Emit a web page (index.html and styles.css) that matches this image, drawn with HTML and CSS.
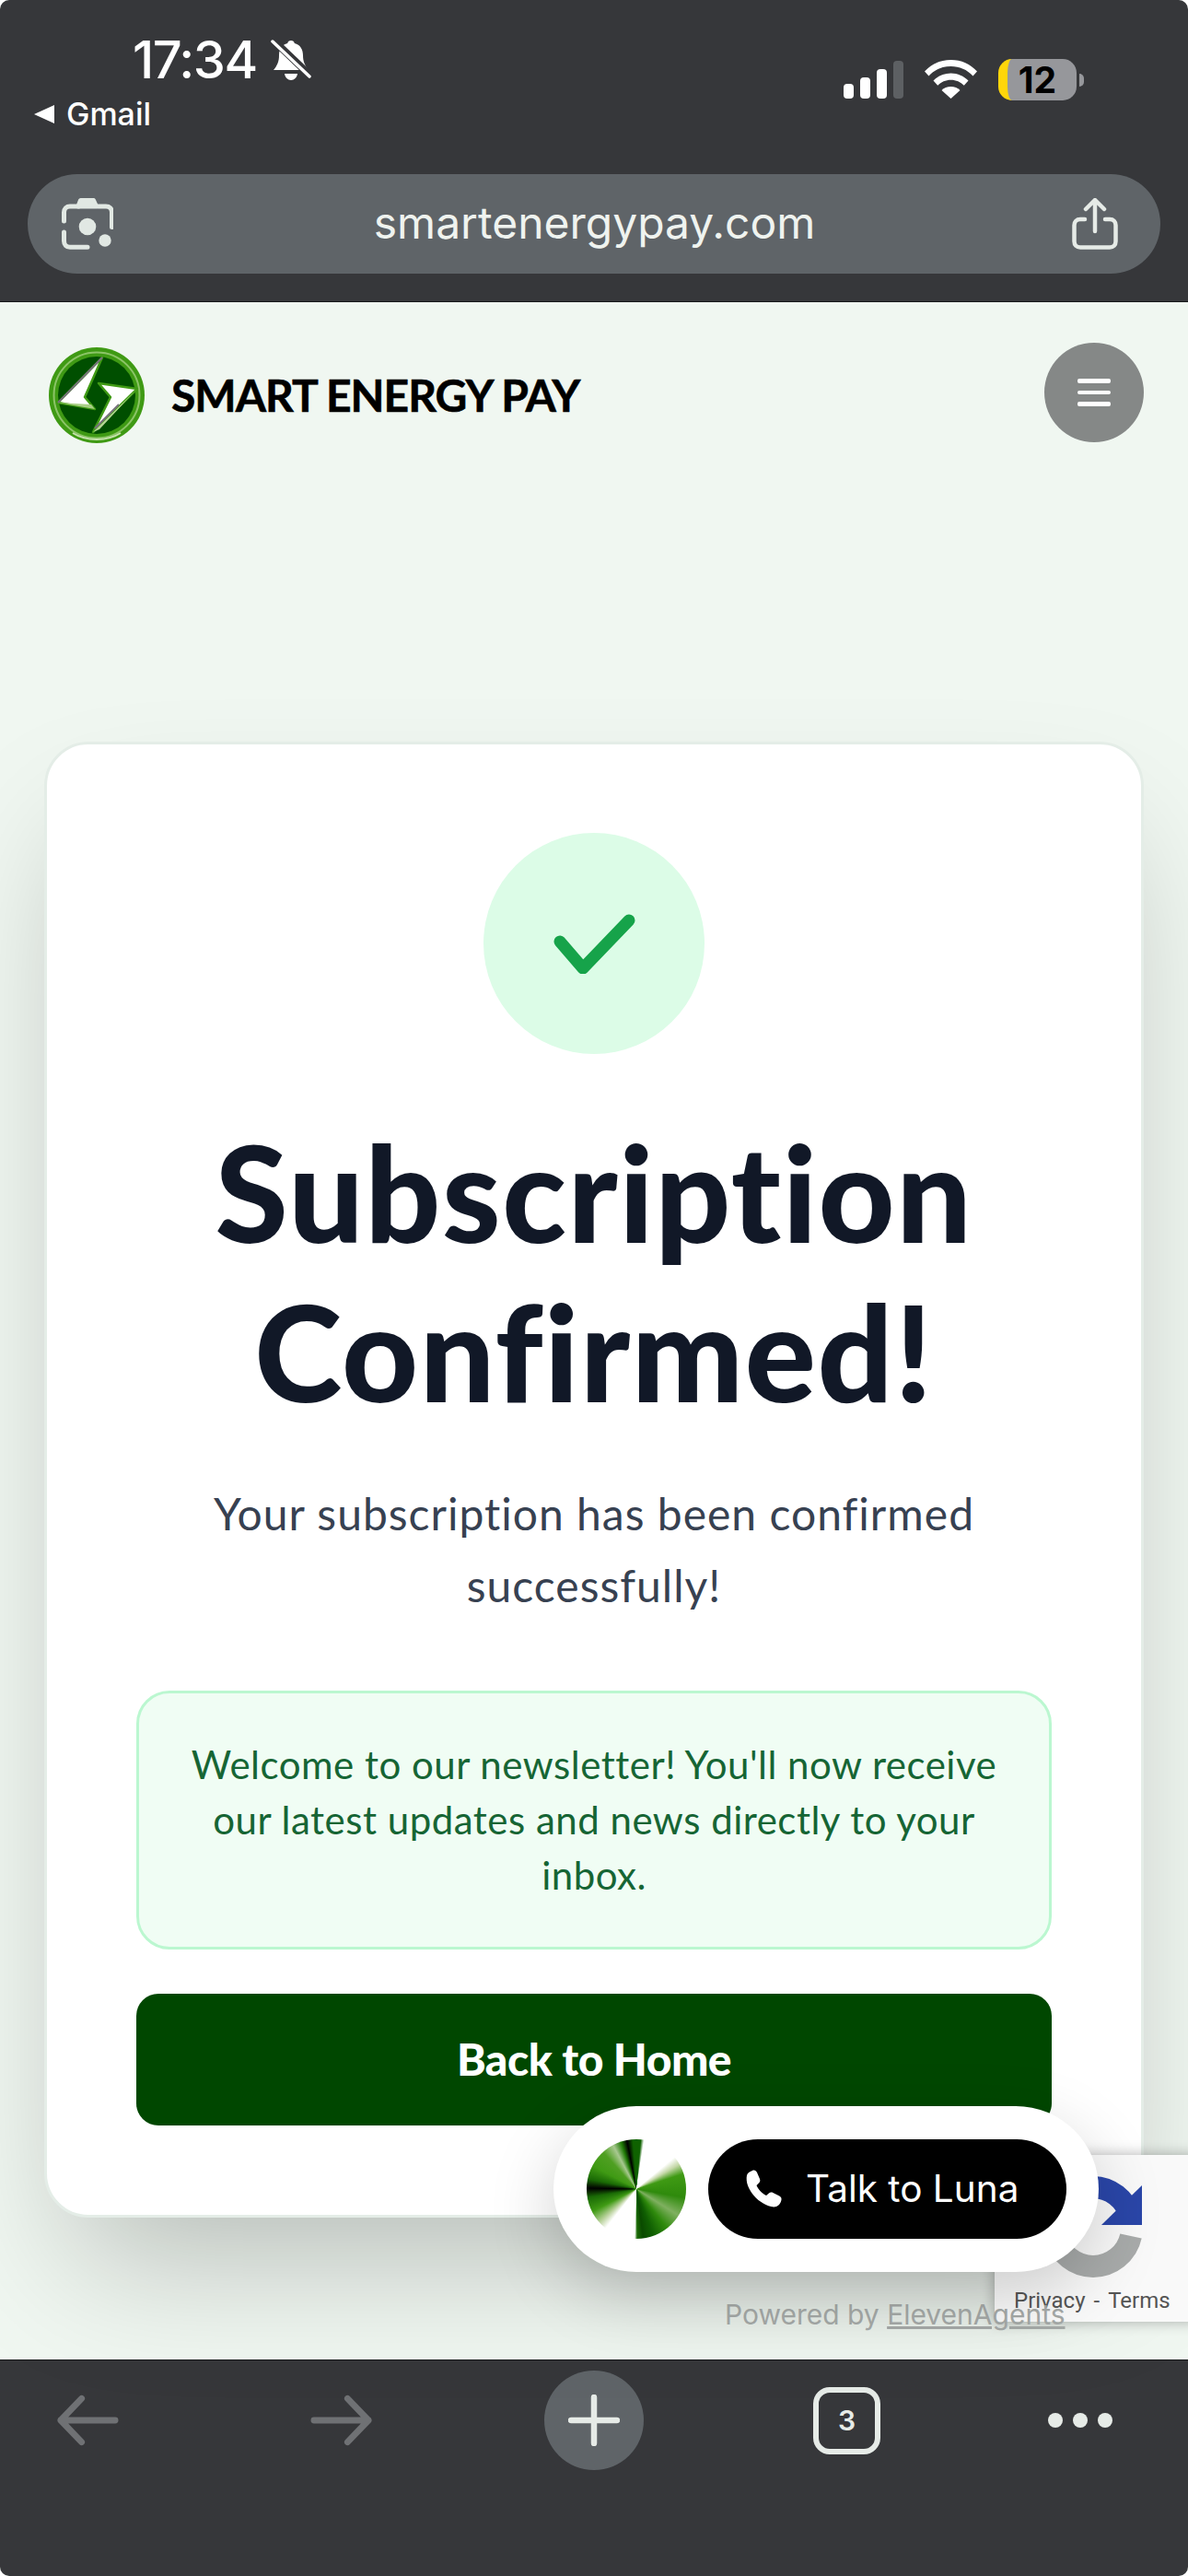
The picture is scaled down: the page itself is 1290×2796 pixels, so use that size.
FILE: index.html
```html
<!DOCTYPE html>
<html lang="en">
<head>
<meta charset="utf-8">
<title>Smart Energy Pay</title>
<link rel="stylesheet" href="styles.css">
</head>
<body>
<div class="phone">
  <header class="chrome-top">
    <div class="status">
      <div class="status-left">
        <div class="clock-row">
          <span class="clock">17:34</span>
          <svg class="bell" viewBox="0 0 44 44"><path d="M22 1c2 0 3.500 1.200 3.800 3 6.200 1.500 9.200 6.500 9.200 13 0 7 2 11 6 16H3c4-5 6-9 6-16 0-6.500 3-11.500 9.200-13C18.500 2.200 20 1 22 1z" fill="#fff"/><path d="M15 37h14c-.5 4-3.500 7-7 7s-6.500-3-7-7z" fill="#fff"/><path d="M1 -1l44 42" stroke="#36373a" stroke-width="8"/><path d="M2 2l40 38" stroke="#fff" stroke-width="3.500" stroke-linecap="round"/></svg>
        </div>
        <div class="back-app"><span class="back-tri"></span><span>Gmail</span></div>
      </div>
      <div class="status-right">
        <div class="signal"><i class="bar b1"></i><i class="bar b2"></i><i class="bar b3"></i><i class="bar b4"></i></div>
        <svg class="wifi" viewBox="0 0 57 42"><path d="M28.500 0C17 0 7.500 4.500 0 12.500l4.500 5C11 10.500 19 7 28.500 7S46 10.500 52.500 17.500l4.500-5C49.500 4.500 40 0 28.500 0z" fill="#fff"/><path d="M28.500 14.500c-7.500 0-14 3-19 8l4.700 5.200c3.700-3.700 8.700-6 14.300-6s10.600 2.300 14.300 6l4.700-5.200c-5-5-11.500-8-19-8z" fill="#fff"/><path d="M28.500 29c-4 0-7.500 1.600-10 4l10 9 10-9c-2.500-2.400-6-4-10-4z" fill="#fff"/></svg>
        <div class="battery"><div class="battery-body"><span class="battery-num">12</span></div><i class="battery-tip"></i></div>
      </div>
    </div>
    <div class="urlbar">
      <svg class="lens" viewBox="0 0 56 56" fill="none" stroke="#e1e8e3" stroke-width="5" stroke-linecap="round" stroke-linejoin="round"><path d="M2.500 25V15.500c0-4 2.700-6.500 6.500-6.500h9.500M39.500 9H48c4 0 6.500 2.500 6.500 6.500v16"/><path d="M18 9l2.500-6.500h14L37.500 9z" fill="#e1e8e3"/><path d="M2.500 37v9.500c0 4 2.700 6.800 6.500 6.800h19"/><circle cx="28" cy="31" r="9.300" fill="#e1e8e3" stroke="none"/><circle cx="47" cy="46" r="6.700" fill="#e1e8e3" stroke="none"/></svg>
      <span class="url">smartenergypay.com</span>
      <svg class="share" viewBox="0 0 50 56" fill="none" stroke="#e6ebe7" stroke-width="4.500" stroke-linecap="round" stroke-linejoin="round"><path d="M14 23H9c-4 0-6.500 2.500-6.500 6.500V47c0 4 2.500 6.500 6.500 6.500h32c4 0 6.500-2.500 6.500-6.500V29.500c0-4-2.500-6.500-6.500-6.500h-5"/><path d="M25 36V3M15 12l10-10 10 10"/></svg>
    </div>
  </header>

  <main class="page">
    <div class="site-header">
      <div class="brand">
        <svg class="logo" viewBox="0 0 104 104">
          <circle cx="52" cy="52" r="52" fill="#3f9a14"/>
          <circle cx="52" cy="52" r="46.500" fill="none" stroke="#8cc468" stroke-width="2"/>
          <circle cx="52" cy="52" r="42" fill="#004f00"/>
          <path d="M58 11L10 60l40 7-11-13z" fill="#fff" stroke="#3f9a14" stroke-width="2.500" stroke-linejoin="round"/>
          <path d="M58 11L10 60" stroke="#77707c" stroke-width="2"/>
          <path d="M10 60l40 7-4-5z" fill="#a9cf86"/>
          <path d="M54 39l42 6-48 47 19-38z" fill="#fff" stroke="#3f9a14" stroke-width="2.500" stroke-linejoin="round"/>
          <path d="M96 45L48 92l7-3 38-41z" fill="#b4d595"/>
          <path d="M76 62L50 88" stroke="#77707c" stroke-width="2"/>
          <path d="M26 93c8 5 16 7 26 7 10 0 18-2 26-7" fill="none" stroke="#c7e2ae" stroke-width="2"/>
        </svg>
        <span class="brand-name">SMART ENERGY PAY</span>
      </div>
      <button class="menu-btn" type="button" aria-label="Menu"><i></i><i></i><i></i></button>
    </div>

    <section class="card">
      <div class="check-circle">
        <svg class="check" viewBox="0 0 90 66" fill="none"><path d="M8 31l25 29L83 8" stroke="#16a34a" stroke-width="13" stroke-linecap="round" stroke-linejoin="round"/></svg>
      </div>
      <h1 class="headline">Subscription Confirmed!</h1>
      <p class="lead">Your subscription has been confirmed successfully!</p>
      <div class="notice">Welcome to our newsletter! You'll now receive our latest updates and news directly to your inbox.</div>
      <a class="home-btn" href="#">Back to Home</a>
    </section>

    <div class="recaptcha">
      <svg class="rc-icon" viewBox="0 0 130 130" fill="none">
        <path d="M24 72a42 42 0 0 0 82 0" stroke="#a8abaa" stroke-width="24"/>
        <path d="M65 19a42 42 0 0 1 40 31" stroke="#2a46a8" stroke-width="24"/>
        <path d="M118 17v43H74z" fill="#2a46a8"/>
      </svg>
      <div class="rc-links"><span>Privacy</span><span>-</span><span>Terms</span></div>
    </div>
    <div class="powered">Powered by <u>ElevenAgents</u></div>
    <div class="luna">
      <div class="luna-avatar"></div>
      <button class="luna-btn" type="button">
        <svg class="phone-icon" viewBox="0 0 42 42"><path d="M9 1c2-1 4 0 5 2l3 7c.7 1.800.3 3.200-1 4.500l-2.500 2.500c1.500 3.800 5.500 8.500 10.500 11l3-2.500c1.300-1 2.800-1.200 4.300-.5l7 3.500c2 1 2.700 2.800 2 5-1 4-4 7-8 7C17 39 0 21 3 6c.5-2.300 3-4 6-5z" fill="#fff"/></svg>
        <span>Talk to Luna</span>
      </button>
    </div>
  </main>

  <footer class="chrome-bottom">
    <div class="tools">
      <svg class="arrow" viewBox="0 0 68 56" fill="none" stroke="#6f7174" stroke-width="7" stroke-linecap="round" stroke-linejoin="round"><path d="M64 28H4M27 4L4 28l23 24"/></svg>
      <svg class="arrow" viewBox="0 0 68 56" fill="none" stroke="#6f7174" stroke-width="7" stroke-linecap="round" stroke-linejoin="round"><path d="M4 28h60M41 4l23 24-23 24"/></svg>
      <div class="new-tab"><svg class="plus" viewBox="0 0 56 56" stroke="#e6ebe7" stroke-width="6.500" stroke-linecap="round"><path d="M28 3v50M3 28h50"/></svg></div>
      <div class="tabs">3</div>
      <div class="more"><i></i><i></i><i></i></div>
    </div>
  </footer>
</div>
</body>
</html>
```
FILE: styles.css
```css
* { box-sizing: border-box; }
html, body { margin: 0; padding: 0; background: #fff; }
.phone {
  position: relative;
  width: 1290px;
  height: 2796px;
  display: flex;
  flex-direction: column;
  overflow: hidden;
  border-radius: 10px;
  background: #f0f7f1;
}
.chrome-top {
  height: 328px;
  flex: none;
  background: #36373a;
  border-bottom: 1px solid #17181a;
  padding: 30px 30px 0;
}
.status { height: 159px; display: flex; justify-content: space-between; }
.status-left { display: flex; flex-direction: column; }
.clock-row { display: flex; align-items: center; margin-left: 114px; height: 70px; gap: 15px; }
.clock { font: 500 56px/70px Inter, sans-serif; color: #fff; letter-spacing: -1.500px; }
.bell { width: 44px; height: 44px; }
.back-app { display: flex; align-items: center; gap: 13px; margin: 4px 0 0 7px; font: 500 34px/40px Inter, sans-serif; color: #fff; }
.back-tri { width: 0; height: 0; border-top: 10px solid transparent; border-bottom: 10px solid transparent; border-right: 22px solid #fff; }
.status-right { display: flex; align-items: flex-start; padding: 34px 83px 0 0; }
.signal { display: flex; gap: 7px; align-items: flex-end; height: 41px; margin: 2px 23px 0 0; }
.bar { width: 11px; border-radius: 4px; background: #fff; display: block; }
.b1 { height: 16px; } .b2 { height: 23px; } .b3 { height: 32px; } .b4 { height: 41px; background: #5d6063; }
.wifi { width: 57px; height: 42px; margin: 1px 23px 0 0; }
.battery { display: flex; align-items: center; }
.battery-body {
  width: 85px; height: 45px; border-radius: 15px;
  background: #96979b; border-left: 10px solid #ffd60a;
  display: flex; align-items: center; justify-content: center;
  padding-right: 10px;
}
.battery-num { font: 700 39px/45px Inter, sans-serif; color: #000; }
.battery-tip { width: 5px; height: 14px; background: #96979b; border-radius: 0 6px 6px 0; margin-left: 3px; display: block; }
.urlbar {
  height: 108px;
  border-radius: 54px;
  background: #5f6468;
  display: flex;
  align-items: center;
  justify-content: space-between;
  padding: 0 46px 0 37px;
}
.lens { width: 56px; height: 56px; }
.share { width: 50px; height: 56px; }
.url { font: 400 48px/60px Inter, sans-serif; color: #eff3ef; padding-bottom: 3px; margin-left: 4px; }

.page { flex: 1; position: relative; display: flex; flex-direction: column; padding: 43px 48px 0; }
.site-header { display: flex; align-items: center; justify-content: space-between; height: 110px; }
.brand { display: flex; align-items: center; gap: 29px; padding: 5px 0 0 5px; }
.logo { width: 104px; height: 104px; }
.brand-name { font: 700 48px/60px Lato, sans-serif; color: #000; white-space: nowrap; letter-spacing: -1px; -webkit-text-stroke: .6px #000; }
.menu-btn {
  width: 108px; height: 108px; border-radius: 50%; border: 0; background: #858887;
  display: flex; flex-direction: column; align-items: center; justify-content: center; gap: 8px;
  padding: 0;
}
.menu-btn i { display: block; width: 36px; height: 4.500px; border-radius: 2px; background: #fff; }

.card {
  margin-top: 324px;
  height: 1602px;
  background: #fff;
  border: 3px solid #e4ede7;
  border-radius: 48px;
  padding: 96px 96px 0;
  display: flex;
  flex-direction: column;
  align-items: center;
  box-shadow: 0 75px 150px -36px rgba(0, 0, 0, .25);
}
.check-circle { width: 240px; height: 240px; border-radius: 50%; background: #dcfce7; display: flex; align-items: center; justify-content: center; flex: none; }
.check { width: 90px; height: 66px; }
.headline { margin: 64px 0 0; font: 900 144px/172.800px Lato, sans-serif; color: #111827; text-align: center; letter-spacing: 1.500px; }
.lead { margin: 50px 0 0; font: 400 48px/78px Lato, sans-serif; color: #374151; text-align: center; letter-spacing: 1px; }
.notice {
  margin-top: 75px; width: 994px; height: 281px; flex: none;
  border: 3px solid #bbf7d0; border-radius: 36px; background: #f0fdf4;
  padding: 47px 48px 0; font: 400 42px/60px Lato, sans-serif; color: #166534; text-align: center; letter-spacing: .5px;
}
.home-btn {
  margin-top: 48px; width: 994px; height: 143px; flex: none; border-radius: 24px; background: #004700;
  display: flex; align-items: center; justify-content: center;
  font: 900 48px/60px Lato, sans-serif; color: #fff; text-decoration: none; letter-spacing: -.5px;
}

.luna {
  position: absolute; left: 601px; top: 1958px; width: 592px; height: 180px;
  border-radius: 90px; background: #fff;
  display: flex; align-items: center; padding-left: 36px; gap: 24px;
  box-shadow: 0 24px 72px rgba(0, 0, 0, .18);
}
.luna-avatar {
  width: 108px; height: 108px; border-radius: 50%; flex: none;
  background: conic-gradient(from 0deg,
    #0f6200 0deg, #0f6200 5deg, #fff 9deg, #fff 50deg, #c5d8a8 60deg, #3f9a14 72deg, #2f8a0c 100deg, #7fb060 122deg,
    #2f8a0c 142deg, #105f02 160deg, #0a4a00 172deg, #1a6a05 179deg, #fff 182deg, #fff 218deg,
    #b9d29c 228deg, #3f9a14 243deg, #1a6a05 260deg, #000 271deg, #1a6a05 282deg,
    #3f9a14 298deg, #4f9f22 318deg, #a8c890 332deg, #1f7a05 342deg, #000 349deg, #0f6200 356deg, #0f6200 360deg);
}
.luna-btn {
  width: 389px; height: 108px; border-radius: 54px; border: 0; background: #000; color: #fff;
  display: flex; align-items: center; padding: 0 0 0 39px; gap: 25px;
  font: 400 40.500px/60px Inter, sans-serif; white-space: nowrap;
}
.phone-icon { width: 42px; height: 42px; }
.powered { position: absolute; left: 787px; top: 2161px; font: 400 30px/46px Inter, sans-serif; color: #a5a9a7; white-space: nowrap; }
.recaptcha {
  position: absolute; right: -10px; top: 2011px; width: 220px; height: 181px;
  background: #f9f9f9; box-shadow: 0 0 14px rgba(0, 0, 0, .3);
}
.rc-icon { position: absolute; left: 42px; top: 16px; width: 130px; height: 130px; }
.rc-links { position: absolute; left: 21px; top: 140px; display: flex; gap: 9px; font: 400 24px/36px Roboto, sans-serif; color: #555; }

.chrome-bottom { height: 235px; flex: none; background: #36373a; border-top: 1px solid #17181a; }
.tools { display: flex; align-items: center; height: 108px; margin-top: 11px; padding-left: 62px; }
.arrow { width: 67px; height: 56px; }
.arrow + .arrow { margin-left: 208px; }
.new-tab { width: 108px; height: 108px; border-radius: 50%; background: #5f6468; display: flex; align-items: center; justify-content: center; margin-left: 187px; }
.plus { width: 56px; height: 56px; }
.tabs { width: 73px; height: 73px; border: 6px solid #e6ebe7; border-radius: 18px; display: flex; align-items: center; justify-content: center; font: 600 30px/1 Inter, sans-serif; color: #e6ebe7; margin-left: 184px; }
.more { display: flex; gap: 11px; margin-left: 182px; }
.more i { width: 16px; height: 16px; border-radius: 50%; background: #e6ebe7; display: block; }
```
